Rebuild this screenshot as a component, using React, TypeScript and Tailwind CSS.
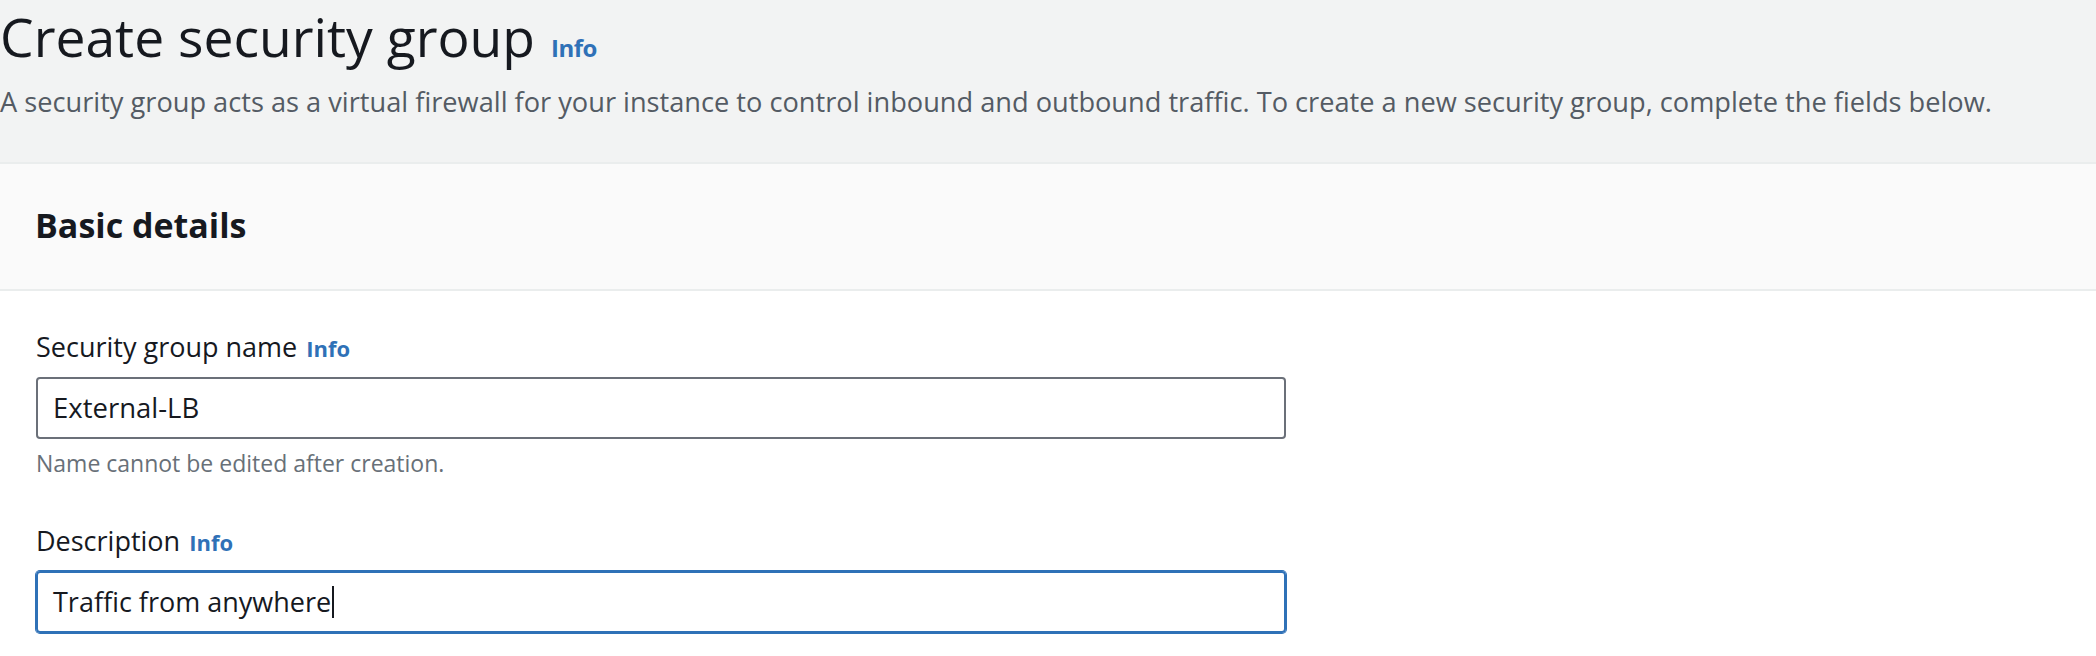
import React from 'react'

const LINK = 'text-[#2f71b7]'

function InfoLink({ className = '' }: { className?: string }) {
  return (
    <a href="#" className={`${LINK} font-bold leading-[30px] ${className}`}>
      Info
    </a>
  )
}

function Label({ text }: { text: string }) {
  return (
    <div className="flex items-baseline">
      <span className="text-[27px] leading-[36px] text-[#16191f]">{text}</span>
      <InfoLink className="ml-[9px] text-[22px]" />
    </div>
  )
}

export default function App() {
  return (
    <div className="w-[2096px] h-[656px] overflow-hidden bg-white font-['Open_Sans',sans-serif]">
      {/* page header */}
      <header className="h-[162px] bg-[#f2f3f3]">
        <div className="flex items-baseline">
          <h1 className="text-[53.4px] leading-[73px] font-normal text-[#16191f]">Create security group</h1>
          <InfoLink className="ml-[16px] text-[24px] tracking-[-0.5px]" />
        </div>
        <p className="mt-[11px] text-[27.2px] leading-[36px] text-[#545b64] whitespace-nowrap">
          A security group acts as a virtual firewall for your instance to control inbound and outbound traffic. To
          create a new security group, complete the fields below.
        </p>
      </header>

      {/* panel */}
      <section className="border-t-2 border-[#eaeded]">
        <div className="h-[127px] bg-[#fafafa] border-b-2 border-[#eaeded] pl-[35px] pt-[39px]">
          <h2 className="text-[34px] leading-[44px] font-bold text-[#16191f]">Basic details</h2>
        </div>

        <div className="px-[36px] pt-[38px]">
          <Label text="Security group name" />
          <div className="mt-[12px] w-[1250px] h-[62px] flex items-center rounded-[4px] border-2 border-[#6b7079] pl-[15px]">
            <span className="text-[27.5px] leading-[36px] text-[#16191f]">External-LB</span>
          </div>
          <p className="mt-[8px] text-[23px] leading-[32px] text-[#687078]">Name cannot be edited after creation.</p>

          <div className="mt-[44px]">
            <Label text="Description" />
          </div>
          <div className="mt-[12px] w-[1250px] h-[62px] flex items-center rounded-[4px] border-2 border-[#2f71b7] ring-1 ring-[#2f71b7] pl-[15px]">
            <span className="text-[27px] leading-[36px] text-[#16191f]">Traffic from anywhere</span>
            <span className="ml-[1px] w-[2px] h-[32px] bg-[#16191f]" />
          </div>
        </div>
      </section>
    </div>
  )
}
